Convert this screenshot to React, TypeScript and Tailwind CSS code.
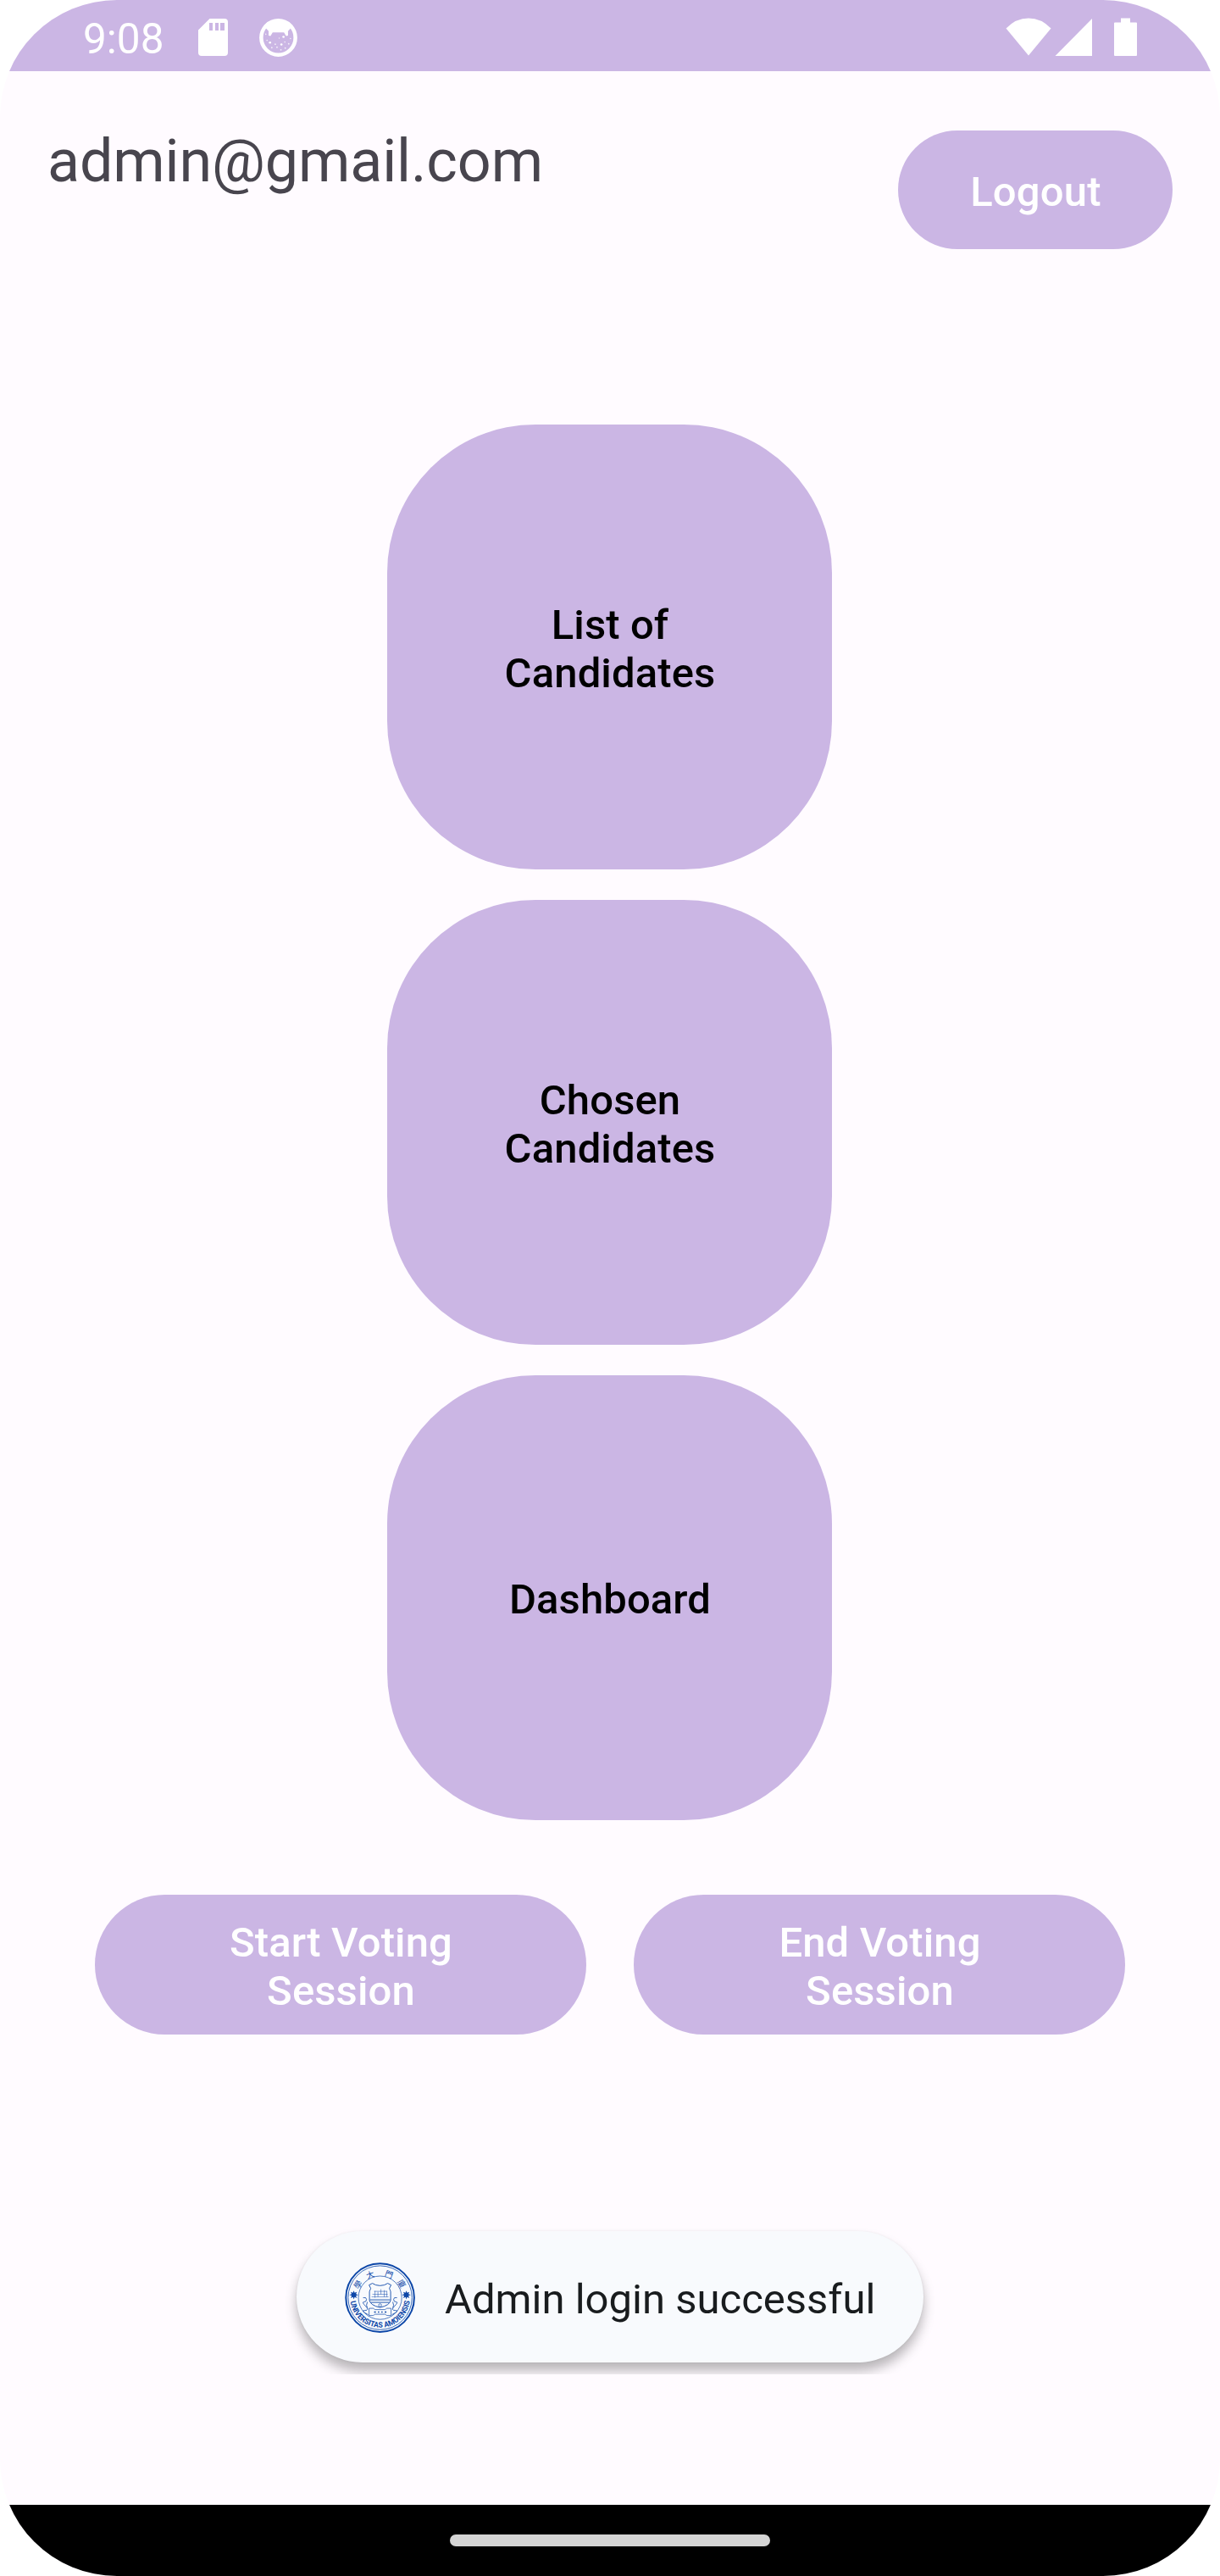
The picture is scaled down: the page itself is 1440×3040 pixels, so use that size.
const SealLogo = () => (
  <svg viewBox="-0.6 -0.6 84 84" className="size-[84px] shrink-0" fill="none" stroke="#0d47a8">
    <defs>
      <path id="motto" d="M6.800 42 A35.200 35.200 0 0 0 77.200 42" />
    </defs>
    <circle cx="42" cy="42" r="40.300" strokeWidth="2" />
    <circle cx="42" cy="42" r="37.700" strokeWidth="0.800" />
    <circle cx="42" cy="42" r="25.600" strokeWidth="0.700" />
    <g fill="#0d47a8" stroke="none">
      <text fontSize="9" fontWeight="700" className="font-[Roboto,sans-serif]">
        <textPath href="#motto" startOffset="4.500" textLength="102" lengthAdjust="spacingAndGlyphs">UNIVERSITAS AMOIENSIS</textPath>
      </text>
      <g fontSize="9.500" fontWeight="400" textAnchor="middle" className="font-['Noto_Sans_CJK_TC',sans-serif]">
        <text transform="translate(15.800 26.500) rotate(-56)" y="3.500">學</text>
        <text transform="translate(30.500 15) rotate(-20)" y="3.500">大</text>
        <text transform="translate(52.500 14.500) rotate(20)" y="3.500">門</text>
        <text transform="translate(67.500 25.500) rotate(56)" y="3.500">廈</text>
      </g>
      <path d="M11 33.600l1 2.600 2.600-1.100-1.100 2.600 2.700 1-2.700 1 1.100 2.600-2.600-1.100-1 2.700-1-2.700-2.600 1.100 1.100-2.600-2.700-1 2.700-1-1.100-2.600 2.600 1.100z" />
      <path d="M73 33.600l1 2.600 2.600-1.100-1.100 2.600 2.700 1-2.700 1 1.100 2.600-2.600-1.100-1 2.700-1-2.700-2.600 1.100 1.100-2.600-2.700-1 2.700-1-1.100-2.600 2.600 1.100z" />
    </g>
    <g strokeWidth="0.900">
      <path d="M29 27l4-2 4 2q5 1.500 10 0l4-2 4 2 -2 4q1 2 1.500 4v10q-1 6-12.500 8.500q-11.500-2.500-12.500-8.500v-10q.5-2 1.500-4z" />
      <path d="M30 44.500h24M31 47.500h22" />
      <path d="M32 41h20M33 38h18M35 34.500h15M36 34v8M39.500 35v6M43 32v6M47 33v8M50 34v7" strokeWidth="0.500" />
      <path d="M29 63v-8.500h5l2 1.500h12l2-1.500h5v8.500h-5l-2-1.500h-12l-2 1.500z" strokeWidth="0.700" />
      <path d="M22 42q4-1 4 2t-3 3 2 5-1 5 4 5M62 42q-4-1-4 2t3 3-2 5 1 5-4 5M27 47q-2 4 0 7M57 47q2 4 0 7" strokeWidth="0.800" />
      <circle cx="42" cy="50.800" r="1.700" strokeWidth="0.700" />
      <path d="M35 58.800h2M39.500 58.800h1.500M43.500 58.800h1.500M47.500 58.800h2" strokeWidth="1.500" />
    </g>
  </svg>
);

const SdCard = () => (
  <svg viewBox="0 0 35 45" className="ml-[42px] h-[45px] w-[35px]">
    <path
      fill="#fff"
      fillRule="evenodd"
      d="M13.500 0H31a4 4 0 0 1 4 4v36a4 4 0 0 1-4 4H4a4 4 0 0 1-4-4V13.500zM13 5v9h4V5zm7 0v9h4V5zm6 0v9h5V5z"
    />
  </svg>
);

const DebugFace = () => (
  <svg viewBox="0 0 44 44" className="ml-[37px] size-[45px]" fill="#fff">
    <circle cx="22" cy="22" r="19.700" fill="none" stroke="#fff" strokeWidth="4.400" />
    <path d="M5 8L10.800 14.500L10.800 19.500L13 20L15.500 16H28.500L31 20L33.200 19.500L33.200 14.500L39 8Q32 1 22 1T5 8Z" />
    <circle cx="12.400" cy="27.600" r="1.300" />
    <circle cx="25.600" cy="29.800" r="1.300" />
    <circle cx="28" cy="21" r="1.300" />
    <g opacity="0.750">
      <circle cx="7.500" cy="18" r="0.800" />
      <circle cx="9" cy="25" r="0.800" />
      <circle cx="18.500" cy="29.500" r="0.900" />
      <circle cx="20.500" cy="33" r="0.900" />
      <circle cx="14.500" cy="33.500" r="0.900" />
      <circle cx="25" cy="36" r="0.900" />
      <circle cx="29.500" cy="27" r="0.800" />
      <circle cx="30" cy="34" r="0.900" />
      <circle cx="34" cy="29" r="0.900" />
      <circle cx="36" cy="23" r="0.800" />
      <circle cx="23" cy="22.500" r="0.700" />
    </g>
  </svg>
);

const SystemIcons = () => (
  <svg viewBox="0 0 156 46" className="h-[46px] w-[156px]" fill="#fff">
    <path d="M0.500 12.500Q12 0.500 27 0.500T53.500 12.500L27 44.500Z" />
    <path d="M102 1V45H58.500Z" />
    <path d="M136 0.500h11v5h7q1 0 1 1v37.500q0 1-1 1h-25q-1 0-1-1v-37.500q0-1 1-1h7z" />
  </svg>
);

const Tile = ({ lines }: { lines: string[] }) => (
  <button className="flex size-[525px] flex-col items-center justify-center rounded-[175px] bg-[#cbb6e4] pt-[4px] pl-[1px] text-[49px] leading-[57px] font-medium tracking-[0.12px] text-black">
    {lines.map((line) => (
      <span key={line}>{line}</span>
    ))}
  </button>
);

const SessionButton = ({ lines }: { lines: string[] }) => (
  <button className="flex h-[165px] w-[580px] flex-col items-center justify-center rounded-full bg-[#cbb6e4] pt-[4px] pl-[1px] text-[49px] leading-[57px] font-medium tracking-[0.12px] text-white">
    {lines.map((line) => (
      <span key={line}>{line}</span>
    ))}
  </button>
);

export default function App() {
  return (
    <div className="h-[3040px] w-[1440px] bg-white font-[Roboto,sans-serif]">
      <div className="flex h-full w-full flex-col overflow-hidden rounded-[138px] bg-[#fffbff]">
        <div className="flex h-[84px] shrink-0 items-center justify-between bg-[#cbb6e4] pr-[97px] pl-[98px]">
          <div className="flex items-center pt-[5px]">
            <span className="w-[94px] pt-[4px] text-[49.5px] leading-[57px] text-white">9:08</span>
            <SdCard />
            <DebugFace />
          </div>
          <div className="pt-[3px]">
            <SystemIcons />
          </div>
        </div>

        <header className="flex items-start justify-between px-[56px] pt-[70px]">
          <h1 className="mt-[-5px] text-[70px] leading-[82px] tracking-[-0.12px] text-[#48454e]">admin@gmail.com</h1>
          <button className="h-[140px] w-[324px] rounded-full bg-[#cbb6e4] pt-[4px] pl-[1px] text-[49px] leading-[57px] font-medium tracking-[0.2px] text-white">
            Logout
          </button>
        </header>

        <main className="mt-[207px] mr-[1px] flex flex-col items-center gap-[36px]">
          <Tile lines={["List of", "Candidates"]} />
          <Tile lines={["Chosen", "Candidates"]} />
          <Tile lines={["Dashboard"]} />
        </main>

        <div className="mt-[88px] flex justify-center gap-[56px]">
          <SessionButton lines={["Start Voting", "Session"]} />
          <SessionButton lines={["End Voting", "Session"]} />
        </div>

        <div className="mt-[218px] flex h-[183px] justify-center overflow-hidden pt-[14px]">
          <div className="flex h-[155px] w-[740px] items-center rounded-full bg-[#f8fafd] pl-[56px] shadow-[0_10px_14px_rgba(0,0,0,0.28),0_0_3px_rgba(0,0,0,0.06)]">
            <SealLogo />
            <span className="ml-[35px] pt-[5px] text-[49px] leading-[57px] whitespace-nowrap text-[#191c1e]">Admin login successful</span>
          </div>
        </div>

        <div className="mt-auto flex h-[84px] shrink-0 items-center justify-center bg-black">
          <div className="h-[14px] w-[378px] rounded-full bg-[#d4d4d4]" />
        </div>
      </div>
    </div>
  );
}
